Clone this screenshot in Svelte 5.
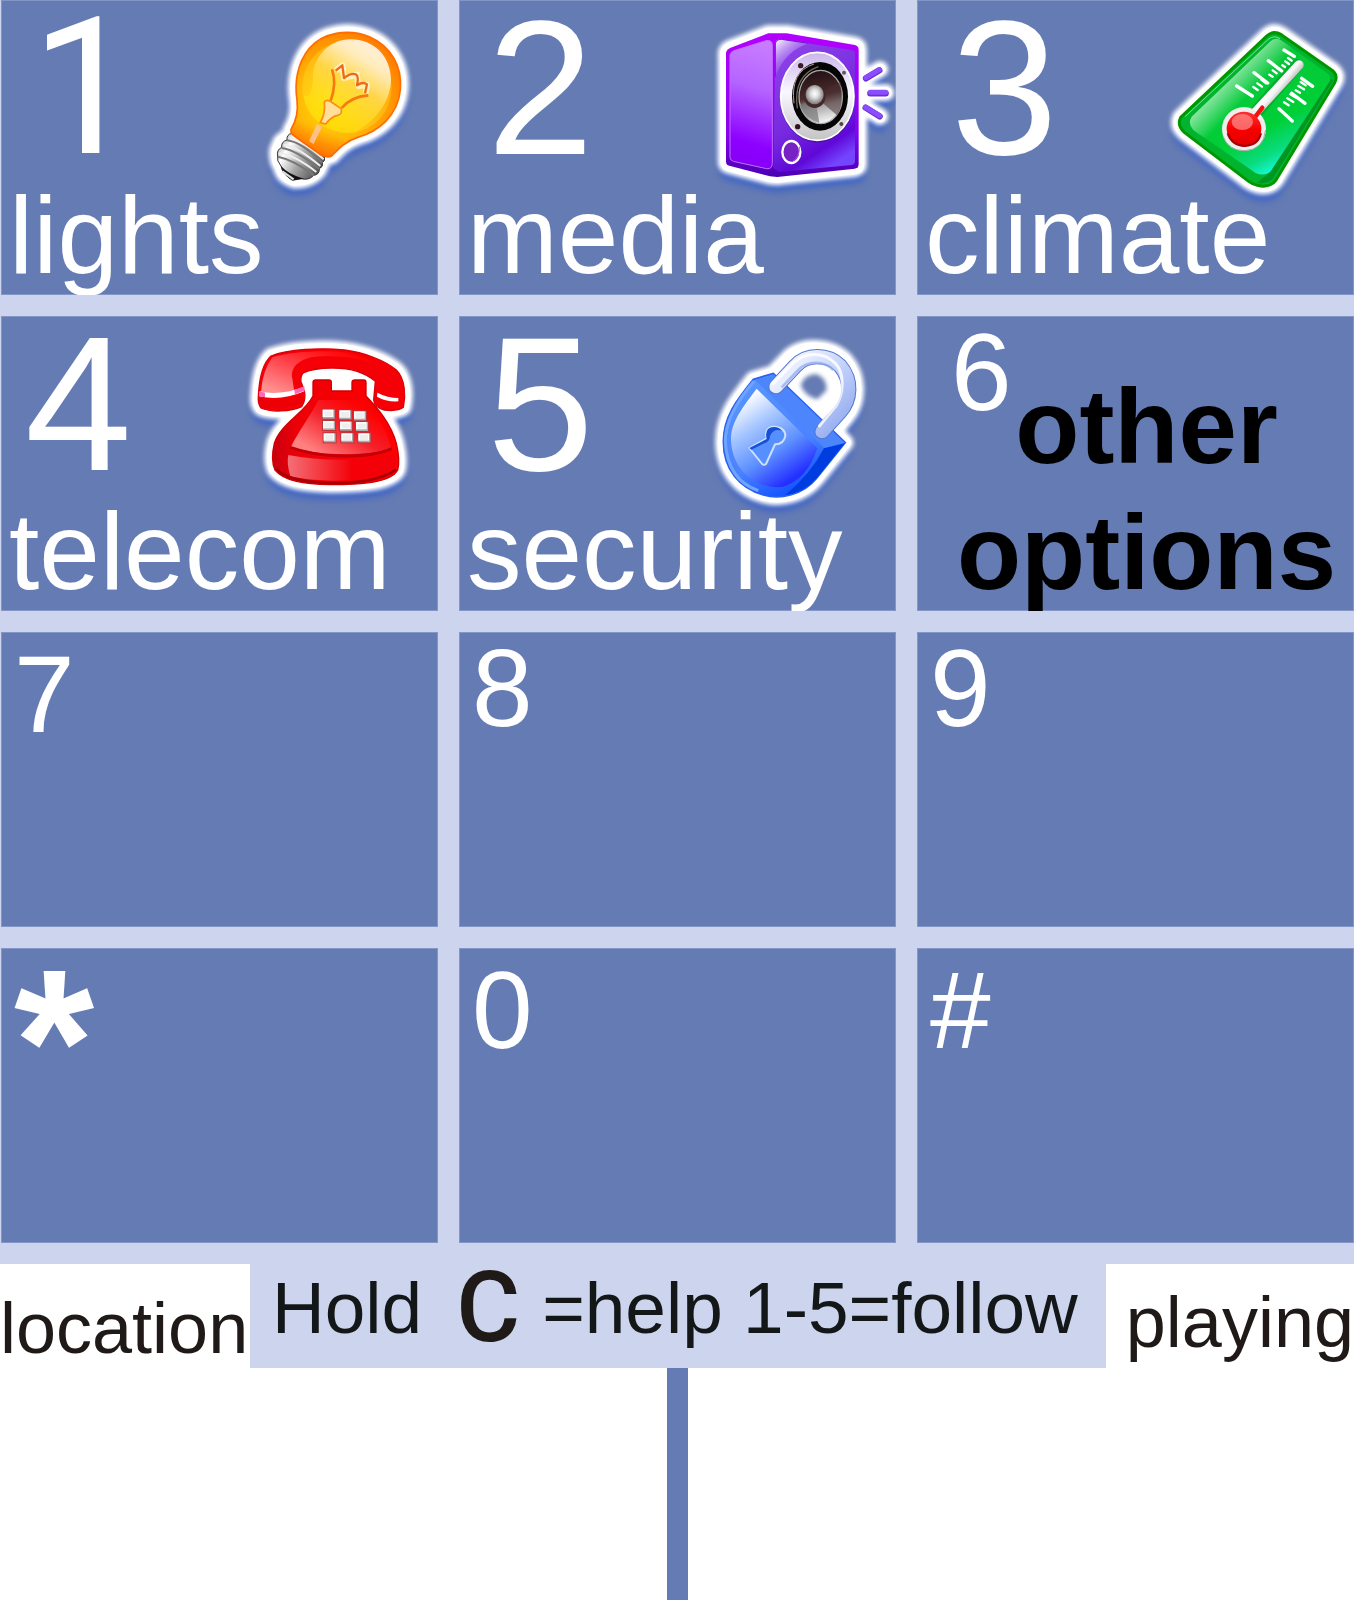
<script>
  const keys = [
    { key: '1', label: 'lights', icon: 'bulb', kind: 'feature slim' },
    { key: '2', label: 'media', icon: 'speaker' },
    { key: '3', label: 'climate', icon: 'thermometer' },
    { key: '4', label: 'telecom', icon: 'phone' },
    { key: '5', label: 'security', icon: 'lock' },
    { key: '6', label: 'other options', kind: 'more' },
    { key: '7', kind: 'plain low' },
    { key: '8', kind: 'plain' },
    { key: '9', kind: 'plain' },
    { key: '*', kind: 'plain low star' },
    { key: '0', kind: 'plain low' },
    { key: '#', kind: 'plain low' }
  ];

  const shapes = {
    bulb: 'M150 388Q174 350 168 300C160 250 168 190 205 145C245 98 320 84 385 110C450 138 485 200 478 270C470 350 410 395 350 412C310 425 290 450 272 468L250 474L232 512Q205 542 160 541Q125 530 120 500Q105 480 109 450L120 425L150 402Z',
    speaker: 'M108 158Q110 148 122 143L235 100L290 100L495 135Q506 138 506 150V492Q506 504 494 506L262 531L240 529L118 497Q108 494 108 485ZM522 235L570 208M540 278H588M525 322L570 350',
    thermometer: 'M92 352L350 108Q370 90 394 104L548 212Q565 228 554 248L378 540Q360 565 322 556Q308 553 296 544L104 398Q80 376 92 352Z',
    phone: 'M82 232C84 180 95 130 120 108C170 88 270 82 340 90C400 98 460 120 496 150C524 178 524 230 517 262Q500 275 460 270Q430 262 428 240L433 186L404 178V228C440 265 480 310 496 370Q508 420 500 450C480 490 380 494 297 494C220 492 160 484 132 450Q118 420 130 370C150 310 220 280 246 228L220 212Q226 240 212 260C180 275 120 278 90 264Q80 250 82 232Z',
    lock: 'M190 178L250 160L300 108C340 75 420 75 465 120C505 165 510 240 470 290L434 334L466 368L380 475C340 525 270 540 220 525C150 505 100 450 100 365C100 290 140 240 190 178Z'
  };

  const views = {
    bulb: '-21 0 612 600',
    speaker: '6 0 612 600',
    thermometer: '0 0 612 600',
    phone: '9 -12 612 600',
    lock: '6 -12 612 600'
  };

  const phonePads = [
    [275, 269], [325, 271], [369, 274],
    [276, 303], [327, 305], [375, 306],
    [278, 340], [331, 340], [382, 340]
  ];
</script>

<main>
  <div class="keypad">
    {#each keys as item}
      <button type="button" class="tile {item.kind ?? 'feature'}">
        <span class="digit">{item.key}</span>
        {#if item.icon}
          <svg class="icon" viewBox={views[item.icon]} aria-hidden="true">
            <path class="shade" d={shapes[item.icon]} />
            <path class="glow" d={shapes[item.icon]} />
            <path class="halo" d={shapes[item.icon]} />

            {#if item.icon === 'bulb'}
              <defs>
                <radialGradient id="bulbGlass" gradientUnits="userSpaceOnUse" cx="275" cy="310" r="240">
                  <stop offset="0" stop-color="#ffe000" />
                  <stop offset=".45" stop-color="#ffb808" />
                  <stop offset=".8" stop-color="#ff9000" />
                  <stop offset="1" stop-color="#ff7200" />
                </radialGradient>
                <linearGradient id="bulbShine" x1=".8" y1=".05" x2=".3" y2=".9">
                  <stop offset="0" stop-color="#fff" />
                  <stop offset=".2" stop-color="#fff6dc" />
                  <stop offset=".5" stop-color="#ffd94f" />
                  <stop offset="1" stop-color="#ffe800" stop-opacity=".5" />
                </linearGradient>
                <linearGradient id="bulbNeck" x1=".4" y1=".45" x2=".2" y2="1">
                  <stop offset="0" stop-color="#ff6a00" stop-opacity="0" />
                  <stop offset="1" stop-color="#ff6000" />
                </linearGradient>
                <linearGradient id="bulbMetal" x1="0" y1="0" x2="1" y2=".6">
                  <stop offset="0" stop-color="#777" />
                  <stop offset=".3" stop-color="#fff" />
                  <stop offset=".6" stop-color="#aaa" />
                  <stop offset="1" stop-color="#555" />
                </linearGradient>
              </defs>
              <path d="M152 400Q136 404 138 420Q120 425 122 442Q106 450 110 468Q106 482 120 498Q124 522 154 541L180 536Q204 542 218 526Q236 524 235 506Q248 500 244 488Q254 482 250 470Z" fill="url(#bulbMetal)" stroke="#333" stroke-width="3" />
              <path d="M138 421Q180 425 244 488M122 444Q166 450 235 507M111 470Q160 480 218 526" fill="none" stroke="#777" stroke-width="6" />
              <path d="M145 414Q190 425 248 478M128 434Q170 440 238 498M115 460Q160 465 226 516" fill="none" stroke="#eee" stroke-width="6" />
              <path d="M120 498Q140 522 188 536L156 541Q126 526 120 498Z" fill="#111" />
              <path d="M124 514L158 538" stroke="#ddd" stroke-width="7" />
              <path d="M150 388Q174 350 168 300C160 250 168 190 205 145C245 98 320 84 385 110C450 138 485 200 478 270C470 350 410 395 350 412C310 425 290 450 272 468Q262 474 240 465L160 408Q148 400 150 388Z" fill="url(#bulbGlass)" stroke="#ff6c00" stroke-width="5" />
              <path d="M150 388Q174 350 168 300L300 340L310 432L272 468Q262 474 240 465L160 408Q148 400 150 388Z" fill="url(#bulbNeck)" />
              <ellipse cx="318" cy="262" rx="134" ry="138" fill="#ffe92e" opacity=".3" />
              <path d="M328 118C400 118 450 170 450 240C448 310 400 365 340 398C260 400 195 350 188 285Q214 300 216 230C218 165 270 118 328 118Z" fill="url(#bulbShine)" opacity=".85" />
              <path d="M284 212L304 196L309 234L348 224L352 258L378 254L374 280" fill="none" stroke="#fff" stroke-width="18" stroke-linejoin="round" opacity=".6" />
              <path d="M284 212L304 196Q306 210 309 234Q330 218 345 223Q354 230 348 256Q366 244 378 253L372 280" fill="none" stroke="#f26a10" stroke-width="7" stroke-linejoin="round" />
              <path d="M273 208Q288 250 269 302M382 286Q330 290 302 324" fill="none" stroke="#f77a10" stroke-width="8" />
              <path d="M250 306Q256 298 268 304L300 326Q306 342 290 346Q270 350 254 372L238 368Q254 340 250 306Z" fill="#ffdf9a" stroke="#ff8a10" stroke-width="5" />
              <path d="M228 372L243 380L218 432L204 424Z" fill="#ffc5a0" opacity=".85" />
            {:else if item.icon === 'speaker'}
              <defs>
                <linearGradient id="boxSide" x1=".5" y1="0" x2=".4" y2="1">
                  <stop offset="0" stop-color="#c87cff" />
                  <stop offset=".35" stop-color="#b565ff" />
                  <stop offset=".8" stop-color="#8d00ff" />
                  <stop offset="1" stop-color="#8500f5" />
                </linearGradient>
                <linearGradient id="boxFront" x1=".2" y1="0" x2=".6" y2="1">
                  <stop offset="0" stop-color="#8d45e8" />
                  <stop offset=".6" stop-color="#7628df" />
                  <stop offset=".85" stop-color="#5f08d8" />
                  <stop offset="1" stop-color="#7445ff" />
                </linearGradient>
                <linearGradient id="boxEdge" x1="0" y1="0" x2="0" y2="1">
                  <stop offset="0" stop-color="#b400ff" />
                  <stop offset=".7" stop-color="#8800ee" />
                  <stop offset="1" stop-color="#4a00b0" />
                </linearGradient>
                <linearGradient id="boxGlint" x1="0" y1="0" x2=".6" y2=".8">
                  <stop offset="0" stop-color="#fff" />
                  <stop offset="1" stop-color="#a060f0" stop-opacity="0" />
                </linearGradient>
                <linearGradient id="ringFace" x1="0" y1="0" x2="0" y2="1">
                  <stop offset="0" stop-color="#cbb5ea" />
                  <stop offset=".45" stop-color="#faf8ff" />
                  <stop offset="1" stop-color="#c4c4c4" />
                </linearGradient>
                <linearGradient id="coneFace" x1=".5" y1="0" x2=".7" y2="1">
                  <stop offset="0" stop-color="#241014" />
                  <stop offset=".45" stop-color="#4a2c2c" />
                  <stop offset=".65" stop-color="#aaa" />
                  <stop offset="1" stop-color="#fff" />
                </linearGradient>
                <radialGradient id="domeFace" cx=".5" cy=".45" r=".55">
                  <stop offset="0" stop-color="#fff" />
                  <stop offset=".4" stop-color="#ddd" />
                  <stop offset="1" stop-color="#777" />
                </radialGradient>
              </defs>
              <path d="M108 158Q110 148 122 143L235 100L290 100L495 135Q506 138 506 150V492Q506 504 494 506L262 531L240 529L118 497Q108 494 108 485Z" fill="url(#boxEdge)" />
              <path d="M120 165Q122 156 132 152L228 122Q246 118 247 135V490Q246 508 230 506L130 484Q120 480 120 472Z" fill="url(#boxSide)" stroke="#c070ff" stroke-width="3" />
              <path d="M256 130Q258 118 272 118L485 150Q495 152 495 162V484Q495 494 485 495L266 516L250 504Z" fill="url(#boxFront)" />
              <path d="M256 232V130Q258 118 272 118L360 130Q285 150 256 232Z" fill="url(#boxGlint)" />
              <path d="M256 230V132Q258 118 274 118L355 130" fill="none" stroke="#6a20c8" stroke-width="3" />
              <ellipse cx="382" cy="294" rx="112" ry="134" fill="#000" opacity=".2" />
              <ellipse cx="382" cy="289" rx="110" ry="132" fill="url(#ringFace)" stroke="#fff" stroke-width="5" />
              <ellipse cx="390" cy="289" rx="84" ry="103" fill="#050505" />
              <path d="M312 310Q300 215 372 192" fill="none" stroke="#b99" stroke-width="3" />
              <path d="M322 325Q308 228 385 200" fill="none" stroke="#765" stroke-width="4" />
              <ellipse cx="392" cy="291" rx="65" ry="80" fill="url(#coneFace)" stroke="#aaa" stroke-width="4" />
              <path d="M374 288L330 318Q350 362 388 368Z" fill="#777" opacity=".7" />
              <path d="M374 288L452 245Q462 320 440 345Z" fill="#4b3032" opacity=".55" />
              <ellipse cx="374" cy="289" rx="33" ry="35" fill="#47282a" />
              <ellipse cx="374" cy="284" rx="27" ry="29" fill="url(#domeFace)" />
              <circle cx="332" cy="197" r="8" fill="#3b1b25" />
              <circle cx="462" cy="218" r="6" fill="#655" />
              <circle cx="323" cy="380" r="8" fill="#312" />
              <circle cx="454" cy="372" r="6" fill="#544" />
              <ellipse cx="304" cy="456" rx="27" ry="33" fill="#7622c4" stroke="#fff" stroke-width="7" />
              <path d="M306 486Q330 470 328 440" fill="none" stroke="#b050e0" stroke-width="3" />
              <path d="M528 235L568 211M541 280H587M527 323L569 349" fill="none" stroke="#6c30cc" stroke-width="19" stroke-linecap="round" />
              <path d="M528 233L568 209M541 277H587M527 322L569 347" fill="none" stroke="#8b4dff" stroke-width="15" stroke-linecap="round" />
            {:else if item.icon === 'thermometer'}
              <defs>
                <linearGradient id="cardFace" x1=".25" y1=".1" x2=".7" y2=".95">
                  <stop offset="0" stop-color="#0ac53c" />
                  <stop offset=".65" stop-color="#00cf36" />
                  <stop offset=".85" stop-color="#0adc80" />
                  <stop offset="1" stop-color="#16ffe8" />
                </linearGradient>
                <linearGradient id="cardGlint" x1=".2" y1=".3" x2=".5" y2=".6">
                  <stop offset="0" stop-color="#fff" stop-opacity=".9" />
                  <stop offset="1" stop-color="#fff" stop-opacity="0" />
                </linearGradient>
                <linearGradient id="tubeFace" gradientUnits="userSpaceOnUse" x1="375" y1="245" x2="405" y2="270">
                  <stop offset="0" stop-color="#fff" />
                  <stop offset=".5" stop-color="#f4f4f4" />
                  <stop offset="1" stop-color="#bbb" />
                </linearGradient>
                <linearGradient id="mercury" x1="0" y1="0" x2="0" y2="1">
                  <stop offset="0" stop-color="#ff3030" />
                  <stop offset=".5" stop-color="#f90000" />
                  <stop offset="1" stop-color="#e00000" />
                </linearGradient>
              </defs>
              <path d={shapes.thermometer} fill="#00b52d" stroke="#009600" stroke-width="9" />
              <path d="M550 240L370 535Q350 556 322 548L355 520L535 235Z" fill="#009624" />
              <path d="M105 350L355 118Q372 104 390 116" fill="none" stroke="#7be09a" stroke-width="3" />
              <path d="M125 350L360 125Q374 110 392 120L535 222Q545 232 538 246L362 514Q345 530 318 520L130 390Q112 372 125 350Z" fill="url(#cardFace)" />
              <path d="M125 350L360 125Q374 110 392 120L430 145L190 435L130 390Q112 372 125 350Z" fill="url(#cardGlint)" />
              <path d="M440 196L318 338" stroke="#067a20" stroke-width="40" stroke-linecap="round" opacity=".35" />
              <path d="M447 195L310 344" stroke="url(#tubeFace)" stroke-width="28" stroke-linecap="round" />
              <circle cx="282" cy="387" r="66" fill="#eee" />
              <path d="M220 410Q232 452 285 452Q340 450 347 390" fill="none" stroke="#aaa" stroke-width="3" />
              <path d="M337 323L310 358" stroke="#ef1010" stroke-width="13" stroke-linecap="round" />
              <circle cx="282" cy="387" r="52" fill="url(#mercury)" />
              <path d="M233 400Q245 436 285 438Q325 436 333 400" fill="none" stroke="#a80000" stroke-width="6" />
              <ellipse cx="277" cy="366" rx="32" ry="24" fill="#ff9a9a" opacity=".65" />
              <path d="M260 258L307 288M312 218L353 249M355 182L395 213M402 150L433 169" stroke="#fff" stroke-width="10" stroke-linecap="round" />
              <path d="M310 261L323 270M322 250L336 260M334 239L348 250M358 224L368 230M368 211L380 220M377 200L390 209M397 196L405 201M406 184L417 192M414 174L425 182" stroke="#fff" stroke-width="7" stroke-linecap="round" />
              <path d="M387 326L427 363M425 280L465 310M455 235L488 259" stroke="#fff" stroke-width="10" stroke-linecap="round" />
              <path d="M402 307L416 316M412 295L430 306M421 283L436 292M437 271L450 278M445 258L462 268M452 246L467 256" stroke="#fff" stroke-width="7" stroke-linecap="round" />
            {:else if item.icon === 'phone'}
              <defs>
                <linearGradient id="phoneBody" x1="0" y1="0" x2="1" y2="0">
                  <stop offset="0" stop-color="#c80010" />
                  <stop offset=".2" stop-color="#ee0008" />
                  <stop offset="1" stop-color="#ff0000" />
                </linearGradient>
                <linearGradient id="phoneFace" x1=".1" y1=".8" x2=".8" y2=".2">
                  <stop offset="0" stop-color="#ff8080" />
                  <stop offset=".55" stop-color="#f4202a" />
                  <stop offset="1" stop-color="#f00" />
                </linearGradient>
                <linearGradient id="phoneGrip" x1="0" y1=".8" x2=".8" y2="0">
                  <stop offset="0" stop-color="#ff9090" />
                  <stop offset=".5" stop-color="#ff4048" />
                  <stop offset="1" stop-color="#f00" />
                </linearGradient>
                <linearGradient id="phoneBase" x1="0" y1=".5" x2=".6" y2=".5">
                  <stop offset="0" stop-color="#f47078" />
                  <stop offset="1" stop-color="#f40008" />
                </linearGradient>
              </defs>
              <path d="M246 188Q246 180 254 180H294Q301 180 301 188V213H363V188Q363 180 372 180H398Q405 180 405 188V228C440 265 480 310 496 370Q508 420 500 450C480 490 380 494 297 494C220 492 160 484 132 450Q118 420 130 370C150 310 220 280 246 228Z" fill="url(#phoneBody)" stroke="#d00000" stroke-width="4" />
              <path d="M262 240H395C435 275 465 320 480 385Q430 405 320 402Q240 400 180 380C205 330 240 285 262 240Z" fill="url(#phoneFace)" />
              <path d="M178 382Q240 405 325 408Q430 410 482 386" fill="none" stroke="#c00008" stroke-width="9" />
              <path d="M172 405Q250 420 340 419Q430 418 490 402Q500 430 490 448Q420 480 310 482Q220 480 178 468Q166 430 172 405Z" fill="url(#phoneBase)" />
              <path d="M136 446Q165 485 297 489Q440 490 496 448" fill="none" stroke="#a90008" stroke-width="8" />
              <path d="M82 232C84 180 95 130 120 108C170 88 270 82 340 90C400 98 460 120 496 150C524 178 524 230 517 262Q500 275 460 270Q430 262 428 240L433 184C400 155 360 143 300 144Q250 144 218 158Q208 165 210 185L220 212Q226 240 212 260C180 275 120 278 90 264Q80 250 82 232Z" fill="#f40006" stroke="#dc0008" stroke-width="4" />
              <path d="M90 216Q95 150 124 112C180 95 280 90 340 97Q390 104 425 128Q340 102 250 110C200 118 178 145 184 175L190 216Q140 232 90 216Z" fill="url(#phoneGrip)" />
              <path d="M86 236Q140 250 220 222V245Q180 272 90 264Z" fill="#ec0006" />
              <path d="M86 214Q145 228 220 200V214Q150 244 85 229Z" fill="#fff" />
              <path d="M86 214L102 218V232L85 229ZM190 210L220 199V212L192 223Z" fill="#ff65bd" />
              <path d="M439 218Q470 234 502 234V244Q465 246 438 230Z" fill="#fff" />
              {#each phonePads as pad}
                <rect x={pad[0] - 3} y={pad[1] - 3} width="42" height="33" fill="#bd3338" />
                <rect x={pad[0]} y={pad[1]} width="36" height="27" fill="#aaa" />
                <rect x={pad[0]} y={pad[1]} width="32" height="22" fill="#fff" />
                <rect x={pad[0] + 5} y={pad[1] + 5} width="24" height="15" fill="#eee" />
              {/each}
            {:else}
              <defs>
                <linearGradient id="lockFace" x1=".15" y1=".1" x2=".65" y2=".95">
                  <stop offset="0" stop-color="#fff" />
                  <stop offset=".3" stop-color="#a9c8ff" />
                  <stop offset=".65" stop-color="#5e91ff" />
                  <stop offset="1" stop-color="#2430ff" />
                </linearGradient>
                <linearGradient id="lockSide" x1="0" y1="0" x2=".5" y2="1">
                  <stop offset="0" stop-color="#5b9aff" />
                  <stop offset=".7" stop-color="#4a82ff" />
                  <stop offset="1" stop-color="#1252ff" />
                </linearGradient>
                <linearGradient id="lockBar" x1="0" y1="0" x2="1" y2="1">
                  <stop offset="0" stop-color="#fff" />
                  <stop offset=".5" stop-color="#c5d3fb" />
                  <stop offset="1" stop-color="#8ea7ed" />
                </linearGradient>
              </defs>
              <path class="gap" d="M332 195Q342 164 378 162Q410 172 410 210L382 238Q345 230 332 195Z" />
              <path d="M190 178L250 160L466 368L380 475C340 525 270 540 220 525C150 505 100 450 100 365C100 290 140 240 190 178Z" fill="url(#lockSide)" stroke="#2860f4" stroke-width="5" />
              <path d="M402 385L464 370L380 475Q340 520 285 526Q360 465 402 385Z" fill="#003de0" />
              <path d="M196 180L402 384L464 368L252 164Z" fill="#4c85fc" />
              <path d="M200 206L382 385Q350 480 280 500C200 512 125 450 123 360C122 305 160 260 200 206Z" fill="url(#lockFace)" />
              <path d="M192 184Q105 285 106 365Q112 480 205 512" fill="none" stroke="#6fa5ff" stroke-width="9" />
              <path d="M178 384L230 355Q222 322 252 320Q286 322 286 348Q280 374 255 373L228 432Q220 438 214 429Z" fill="#5690ff" stroke="#cfe0ff" stroke-width="6" stroke-linejoin="round" />
              <path d="M178 384L230 357Q222 322 252 321Q268 322 276 332Q250 325 240 348Q240 365 220 371L184 389Z" fill="#1650d6" />
              <path d="M258 200L315 139C350 99 415 102 450 137C488 181 482 240 450 276L396 335" fill="none" stroke="#5476cb" stroke-width="46" stroke-linecap="round" />
              <path d="M258 200L315 139C350 99 415 102 450 137C488 181 482 240 450 276L396 335" fill="none" stroke="url(#lockBar)" stroke-width="40" stroke-linecap="round" />
              <path d="M250 190L310 128C350 92 405 98 436 130C464 158 462 218 438 258L388 318" fill="none" stroke="#fff" stroke-width="9" stroke-linecap="round" opacity=".8" />
              <path d="M275 202L325 150C352 120 404 122 430 150" fill="none" stroke="#8ea8ed" stroke-width="8" opacity=".7" />
            {/if}
          </svg>
        {/if}
        {#if item.label}<span class="label">{item.label}</span>{/if}
      </button>
    {/each}
  </div>

  <div class="strip">
    <h2 class="location">location</h2>
    <p class="hint"><span>Hold</span><kbd>C</kbd><span>=help 1-5=follow</span></p>
    <h2 class="playing">playing</h2>
  </div>

  <div class="panels">
    <section aria-label="location"></section>
    <section aria-label="playing"></section>
  </div>
</main>

<style>
  :global(body) {
    margin: 0;
    background: #fff;
  }

  main {
    display: flex;
    flex-direction: column;
    min-height: 100vh;
    font-family: 'Liberation Sans', Arial, sans-serif;
  }

  .keypad {
    display: grid;
    grid-template-columns: repeat(3, minmax(0, 1fr));
    grid-auto-rows: 295px;
    gap: 21px;
    padding: 0 0 21px 1px;
    background: #cdd5ee;
  }

  .tile {
    display: grid;
    grid-template-columns: minmax(0, 1fr) 204px;
    grid-template-rows: 175px 120px;
    align-content: start;
    box-sizing: border-box;
    margin: 0;
    padding: 0;
    overflow: hidden;
    border: 0;
    border-radius: 0;
    box-shadow: inset 0 0 0 1px #8496c8;
    background: #657bb3;
    color: #fff;
    font-family: inherit;
    text-align: left;
    cursor: pointer;
  }

  .digit {
    padding-left: 24px;
    font-size: 192px;
    line-height: 175px;
  }

  .tile.slim .digit {
    padding-left: 30px;
    font-family: Roboto, sans-serif;
  }

  .tile:nth-child(3n + 2) .digit {
    padding-left: 28px;
  }

  .tile:nth-child(3n) .digit {
    padding-left: 34px;
  }

  .label {
    grid-column: 1 / -1;
    z-index: 1;
    padding-left: 8px;
    font-size: 109px;
    line-height: 120px;
    white-space: nowrap;
  }

  .tile.plain,
  .tile.more {
    grid-template-columns: minmax(0, 1fr);
    grid-template-rows: auto;
  }

  .tile.plain .digit,
  .tile.more .digit {
    font-size: 109px;
    line-height: 112px;
  }

  .tile.plain .digit {
    padding-left: 13px;
  }

  .tile.low .digit {
    padding-top: 6px;
  }

  .tile.star .digit {
    font-size: 206px;
    font-weight: 700;
    line-height: 176px;
  }

  .tile.more .digit,
  .tile.more .label {
    grid-area: 1 / 1;
  }

  .tile.more .label {
    padding: 48px 0 0 22px;
    color: #000;
    font-size: 105px;
    font-weight: 700;
    line-height: 126px;
    text-align: center;
    white-space: normal;
  }

  .icon {
    width: 204px;
    height: 200px;
    overflow: visible;
  }

  .shade,
  .glow,
  .halo {
    stroke-linejoin: round;
    stroke-linecap: round;
  }

  .shade {
    fill: #3c62c4;
    stroke: #3c62c4;
    stroke-width: 40px;
    filter: blur(11px);
    transform: translateY(24px);
  }

  .glow {
    fill: #fff;
    stroke: #fff;
    stroke-width: 50px;
    filter: blur(7px);
  }

  .halo {
    fill: #fff;
    stroke: #fff;
    stroke-width: 34px;
  }

  .gap {
    fill: #657bb3;
    filter: blur(6px);
  }

  .strip {
    display: grid;
    grid-template-columns: 250px minmax(0, 1fr) 248px;
    height: 104px;
    background: #cdd5ee;
    color: #1f1a17;
    font-size: 72px;
    line-height: 80px;
    white-space: nowrap;
  }

  .strip h2,
  .strip p {
    margin: 0;
    font-size: inherit;
    font-weight: 400;
  }

  .location,
  .playing {
    box-sizing: border-box;
    background: #fff;
  }

  .location {
    padding-top: 24px;
  }

  .playing {
    padding-top: 18px;
    text-align: right;
  }

  .strip .hint {
    display: flex;
    align-items: flex-start;
    padding: 4px 0 0 22px;
    color: #141718;
    font-size: 73px;
  }

  kbd {
    padding: 0 22px 0 34px;
    color: #1f1a17;
    font-family: Roboto, sans-serif;
    font-size: 98px;
    font-weight: 500;
    line-height: 80px;
  }

  .panels {
    display: grid;
    flex: 1;
    grid-template-columns: repeat(2, minmax(0, 1fr));
    gap: 21px;
    min-height: 232px;
    background: #657bb3;
  }

  .panels section {
    background: #fff;
  }
</style>
